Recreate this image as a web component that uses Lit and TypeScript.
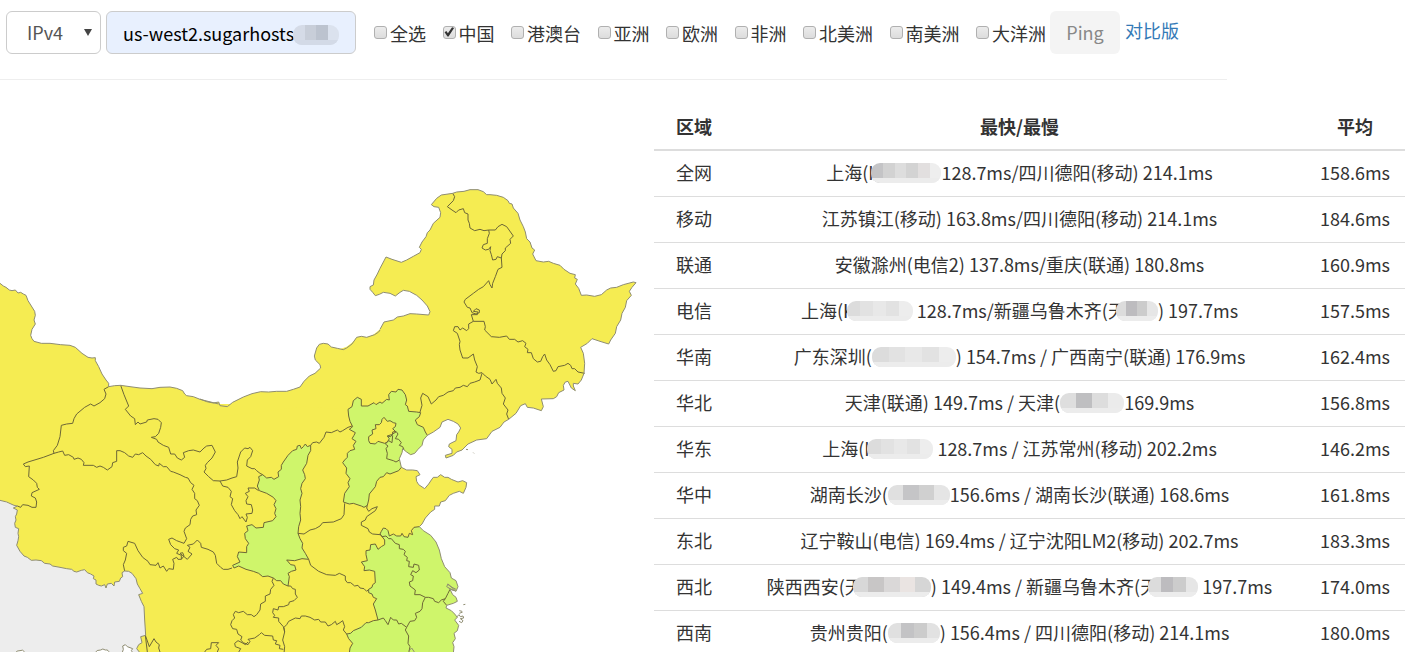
import { LitElement, html, svg, css } from "lit";
import { customElement, property } from "lit/decorators.js";
import { styleMap } from "lit/directives/style-map.js";

const XJ_NORTH =
  "0,40 10,48 18,52 28,60 36,62 46,60 54,69 62,67 70,72 78,76 84,92 94,108 104,124 106,136 102,150 106,162 96,178 92,196 96,206 102,214 124,220 150,220 182,224 210,226 226,232 246,250 264,262 276,264 286,263 286,272 296,290 306,312 318,330 326,340 326,350 344,347 362,346 390,350 420,354 456,356 480,352 510,351 530,355 548,362 554,372 560,377 580,380 600,388 624,394 656,402";
const TIBET_SOUTH =
  "0,691 20,696 42,706 52,708 40,714 52,720 50,732 46,740 48,750 44,760 46,772 56,776 54,790 56,800 54,812 50,826 60,844 72,858 82,862 94,871 108,870 124,872 134,880 150,882 158,888 180,892 200,896 215,898 222,904 230,906 244,901 254,899 262,908 272,912 282,918 280,926 288,930 288,942 296,946 304,948 314,944 318,954 322,942 334,940 342,948 344,936 358,934 362,924 368,920 366,908 374,903 386,904 396,910 402,918 408,926 412,942 420,956 428,970 416,974 424,994 432,1010 434,1050 436,1080 437,1096 422,1100 426,1118 416,1124 410,1136 418,1146";
const MONGOLIA =
  "0,207 20,215 40,219 56,216 60,227 82,230 98,217 130,201 156,191 182,185 206,186 230,184 260,184 280,178 300,171 312,154 328,138 345,130 362,114 360,104 346,90 343,78 350,54 358,43 370,40 384,42 394,51 412,55 430,59 440,54 456,42 470,22 484,19 500,22 524,14 536,6 540,0";
const NORTHEAST =
  "0,507 20,500 36,488 52,472 70,474 84,471 100,464 120,448 132,426 160,420 172,411 190,408 210,401 230,402 266,405 270,395 262,378 246,360 230,346 208,334 190,331 180,337 166,348 150,340 130,337 118,343 106,347 98,337 90,328 90,320 100,315 102,300 112,282 120,265 138,231 156,238 184,247 200,240 220,229 240,218 244,208 238,202 246,186 258,170 262,158 270,150 280,130 300,112 302,98 296,82 282,80 274,74 290,55 304,45 338,40 350,36 372,34 390,29 414,29 430,35 440,44 450,44 470,46 490,52 504,62 508,70 516,72 520,84 534,100 540,120 550,140 556,156 560,176 570,186 576,204 584,210 578,222 588,242 610,246 626,244 640,250 660,256 672,268 690,280 706,284 704,294 712,298 706,312 716,325 724,346 740,345 764,349 784,344 800,330 812,324 830,322 850,314 880,306 888,308 876,322 868,334 874,346 860,362 856,382 846,400 842,420 830,440 826,460 812,480 806,492 780,484 756,476 742,490 722,502 730,520 734,550 732,580 724,600 714,612 700,610 700,618 706,632 694,624 684,604 676,606 670,616 672,630 656,638 650,650 640,656 604,657 610,680 604,692 580,684 562,682 556,671 542,677 528,700 506,718 492,726 480,742 456,754 440,776 410,780 384,792 366,810 350,816 340,826 318,834 316,826 336,820 336,808 326,800 328,792 348,782 350,764 356,756 362,744 354,732 340,724 324,718 306,726 300,742 280,756 262,766";
const HEBEI_COAST = "622,166 610,180 606,196 594,208 584,220 572,224 560,216 548,206 546,218 538,236 544,262";
const SHANDONG_COAST =
  "544,262 560,270 578,270 592,272 600,284 588,290 590,304 596,314 614,326 626,312 634,300 640,292 652,292 662,284 674,292 684,292 694,298 714,306 728,302 740,308 738,322 730,340 718,334 700,340 688,346 676,362 662,366 658,378 644,378 644,388 632,396 616,414 606,432 598,440";
const JIANGSU_COAST =
  "598,440 610,452 632,466 648,486 658,510 664,536 674,560 690,578 694,594 708,602 714,620 708,634 690,626 680,620 684,612 696,622 708,628";
const SHANGHAI = "690,628 698,644 708,652 712,664 700,670 680,676";
const ZHEJIANG_COAST = "680,676 678,684 694,692 704,702 712,712 704,720 716,736 712,752 702,760 706,776 698,788 702,800 700,820";
const ANHUI_JIANGSU =
  "480,462 486,470 498,468 506,476 514,476 526,490 538,494 538,506 550,508 556,514 552,524 562,532 560,542 568,544 566,560 580,562 582,552 596,556 598,570 588,578 578,572 572,584 580,588 578,602 568,606 570,618 586,630 584,644 600,644 616,652";
const ANHUI_SOUTH = "474,720 490,714 496,722 504,734 512,712 520,720 530,720 536,732 544,730 560,742";
const ZHEJIANG_WEST = "560,742 570,724 584,722 590,712 586,700 600,694 606,686 608,668 616,652";
const JIANGXI_EAST = "560,742 556,750 566,768 564,790 570,800 566,820";
const rev = (p: string) => p.split(" ").reverse().join(" ");

const SHAANXI =
  "272,196 262,200 256,192 250,200 244,206 240,196 232,198 230,208 218,212 204,226 190,246 184,256 184,268 174,276 176,290 162,298 154,292 140,294 128,284 116,290 118,300 112,318 118,332 140,340 160,352 168,362 162,374 168,386 164,400 168,410 158,422 132,428 130,442 108,444 96,434 80,438 84,452 74,460 76,476 86,490 80,500 80,518 56,516 52,530 60,546 38,556 42,564 56,558 78,568 100,574 116,580 128,590 144,588 160,594 170,602 182,602 190,612 204,618 208,590 204,580 214,574 228,570 224,556 212,554 200,540 224,542 246,536 266,538 256,520 246,504 248,490 240,476 234,460 236,440 242,420 240,400 242,380 240,360 246,340 242,326 246,310 256,296 254,284 248,270 260,250 264,226 272,212";
const HEBEI_LAND =
  "544,262 536,272 510,282 500,278 490,290 480,292 470,304 466,320 448,342 446,360 442,376 432,382 424,378 400,370 388,372 370,366 374,340 388,320 384,308 390,296 378,280 380,264 368,248 374,240 382,232 382,220 390,212 404,208 400,196 408,184 396,176 402,166 406,158 388,148 398,140 390,124 386,108 384,88 396,80 400,62 412,52 424,58 424,78 444,78 462,68 468,74 480,66 486,70 500,58 508,60 506,44 514,34 528,36 534,28 546,30 556,44 560,60 556,74 562,78 566,94 590,96 602,98 598,110 586,120 592,134 610,142 616,156 622,166";

const WEST_LINES = [
  "326,350 312,358 318,372 314,386 300,398 282,408 272,402 254,412 230,432 222,446 218,460 200,462 184,466 180,500 172,526 160,542 162,550",
  "162,550 130,562 84,576 70,582 76,590 88,588 86,620 100,630 110,640 112,652 118,658 96,668 94,678 106,684 110,696 108,712 96,712 84,706 68,704 62,712 52,708",
  "162,550 176,546 188,543 194,556 206,554 220,562 222,568 234,564 244,568 252,578 250,586 280,586 290,592 300,588 310,592 322,600 336,590 338,578 350,574 350,542 360,542 374,548 386,558 398,562 406,552 416,554 428,548 438,558 452,568 466,584 476,588 478,580 490,590 500,590 512,604 520,606 540,614 556,622 564,624 572,638 582,646 576,658 584,670 584,686 592,692 598,706 588,720 590,734 578,738 572,748 570,764 556,774 552,784 560,806 552,820 530,812 516,804 506,808 512,824 524,836 536,840 530,850 544,856 544,868 552,858 548,848 540,850 562,868 576,852 564,844 570,832 562,826 580,822 592,810 602,820 604,832 624,838 640,846 646,856 650,880 662,892 670,898 684,898 696,894",
  "374,903 370,884 376,870 380,850 370,842 370,832 380,828 384,814 404,820 414,842 428,862 444,874 450,884 468,886 474,878 480,894 490,888 500,904 506,896 520,898 522,880 518,868 530,862 534,868 544,868",
  "362,346 372,374 386,408 376,418 392,438 404,446 406,464 414,456 420,462 440,456 442,450 462,446 474,448 484,458 482,472 476,490 466,500 454,502 470,508 474,516 490,526 506,532 512,552 524,552 532,564 544,570 554,562 550,548 566,542 580,540 600,546 612,534 620,528 636,526 646,546 636,564 622,578 616,586 618,596 612,606 626,620 640,632 660,633",
  "442,1146 436,1096 448,1130 462,1106 468,1116 478,1124 476,1134 480,1146",
  "614,1146 620,1138 632,1136 634,1118 656,1118 648,1126 656,1136 652,1146",
];
const EAST_LINES = [
  "272,196 278,188 290,186 298,190 312,172 318,156 334,158 352,150 360,156 368,152 384,142 396,138",
  "234,460 252,462 270,450 286,446 300,438 308,428 340,426 364,416 372,404 374,370",
  "442,376 440,384 446,394 456,386 472,380 466,392 440,410 436,420 424,426 424,436 444,446 448,456 458,462 480,464",
  "480,462 494,480 494,494 484,500 474,508 466,492 452,494 450,510 438,512 438,524 442,542 424,546 434,560 432,572 448,570 464,574 466,608 458,614 456,622 446,628 446,638 456,642 460,652 470,656 460,672 466,690 474,720",
  "266,538 272,556 288,568 296,574 320,584 346,586 358,580 376,588 376,600 382,608 392,608 404,618 414,616 420,624 432,626 440,634 446,628",
  "474,720 460,722 446,728 438,728 424,742 400,752 392,760 380,762",
  "194,756 192,742 200,734 206,724 226,714 240,716 244,708 256,708 270,712 284,720 296,718 302,726 316,726 324,738 334,734 346,724 350,734 360,728 368,722 374,740 370,750 380,762 386,776 398,790 390,804 388,820",
  "204,618 212,618 218,626 226,628 226,642 232,652 222,662 208,666 206,674 190,680 176,680 174,690 160,686 158,698 164,706 160,712 176,714 176,724 190,740 194,756 188,780 194,800 192,820",
  "160,594 156,604 162,616 152,628 150,642 136,648 136,664 122,672 120,690 110,704 102,710 94,704 82,704 70,694 56,698 46,694 40,704 44,714 36,722 32,734 38,746 50,748 54,762 66,770 62,780 70,788 84,794 90,784 84,778 104,774 118,764 124,758 134,766 158,768 160,780 170,782 166,792 180,796 178,806 190,808",
  "54,820 62,806 46,800 44,790 54,782 66,788 76,794 84,786",
  "0,303 20,300 36,294 50,290 54,264 52,246 62,216 74,204 84,206 90,202 98,212 92,230 82,240 80,258 96,266 104,266 110,272 120,280 128,284",
  "0,303 8,318 24,322 34,334 30,350 38,356 34,374 44,392 54,404 60,416 66,410 78,426 82,412 78,402 96,400 98,390 94,374 80,372 78,362 84,350 76,340 88,334 84,324 104,324 116,332",
  "502,168 512,170 518,162 518,156 528,154 534,162 526,176 536,178 544,188 538,196 548,200 552,208",
  "518,166 516,188 506,182 496,192 504,198 498,206 502,220 500,236 520,242 528,246 538,240",
  "676,656 684,640 690,628",
  "616,652 626,652 640,656 644,664 656,668 664,660 676,656 670,664 680,676",
];
const NORTHEAST_LINES = [
  "338,40 344,50 340,62 322,80 336,90 348,98 356,90 370,86 374,98 384,102 384,120 388,130 390,144 404,152 420,148 432,152 446,150 448,160 442,176 442,190 430,194 426,204 436,210 446,208 452,200 450,212 454,224 458,240 468,238 472,230 484,234 486,262 474,268 466,290 458,310 456,324 450,314 446,302 430,320 416,328 400,340 376,358 372,366 382,382 390,384 396,398 408,402 418,398 418,390 408,386 400,394 414,396 412,404 394,404 400,424",
  "446,150 466,150 474,140 486,133 500,140 520,168 510,178 512,190 496,204 496,212 486,222 484,234",
  "400,424 432,424 436,440 434,450 454,470 478,472 500,468 508,478 524,478 534,486 548,482 558,490 554,500 564,508 562,518 574,518 580,536 592,546 602,544 608,530 614,522 620,540 630,554 640,574 648,572 654,560 674,556 684,550 692,556 696,566 704,566 714,576 734,580",
  "400,424 386,432 386,446 380,452 368,444 360,450 354,440 344,440 340,452 352,460 360,484 358,494 360,510 368,534 384,534 400,522 404,540 412,560 408,576 416,580 426,578 436,588 450,598 456,612 468,598 472,610 484,624 486,640 496,654 490,672 504,690 500,702 506,718",
  "426,580 420,600 404,606 390,610 382,620 370,616 360,622 346,624 340,632 324,636 310,646 296,650 288,660 274,672 264,650 248,640 242,654 246,676 240,696",
];

/** Map of average latency by province. */
@customElement("ping-map")
class PingMap extends LitElement {
  static styles = css`
    :host { display: block; min-width: 0; min-height: 0; }
    svg { display: block; width: 100%; height: 100%; }
    .y { fill: #f5ec52; stroke: none; }
    .g { fill: #cff56b; stroke: none; }
    .n { fill: #ededed; stroke: none; }
    .w { fill: #fff; }
    .l { fill: none; }
    .l, .w { stroke: #6d6736; stroke-width: 3; stroke-linejoin: round; }
    .w, .c { stroke: #8f8d72; }
  `;
  render() {
    const line = (p: string) => svg`<polyline class="l" points=${p} />`;
    const coast = (p: string) => svg`<polyline class="l c" points=${p} />`;
    return html`<svg viewBox="0 240 1962 1716" preserveAspectRatio="xMinYMin slice" role="img" aria-label="中国">
      <g transform="translate(0 810)">
        <polygon class="n" points="0,691 42,706 300,800 440,900 440,1150 0,1150" />
        <polygon class="y" points="${XJ_NORTH} 722,402 722,1150 ${rev(TIBET_SOUTH)}" />
        <path class="w" d="M46 1150q4-10 14-8q8-5 14 4l4 4M284 1150q6-12 18-10q6-6 14 0q10-2 12 10M366 1150l4-12l-2-10l8-4l6 6l16 6l-4 6l6 8" />
      </g>
      <g transform="translate(600 990)">
        <polygon class="y" points="${MONGOLIA} 720,0 720,230 640,300 540,390 0,390" />
      </g>
      <g transform="translate(1020 540)">
        <polygon class="y" points="${NORTHEAST} 0,770" />
      </g>
      <g transform="translate(660 1140)">
        <polygon class="y" points="-5,110 250,80 622,100 ${HEBEI_COAST} ${SHANDONG_COAST} 560,500 560,820 -5,820" />
        <polygon class="g" points=${SHAANXI} />
        <polygon class="g" points="${HEBEI_LAND} ${HEBEI_COAST}" />
        <polygon class="y" points="446,170 458,162 456,150 468,146 466,134 484,128 492,112 502,124 520,128 528,132 518,146 528,156 514,164 502,168 506,182 494,190 474,186 450,190" />
        <polygon class="g" points="480,462 494,480 494,494 484,500 474,508 466,492 452,494 450,510 438,512 438,524 442,542 424,546 434,560 432,572 464,574 466,608 446,628 446,638 470,656 460,672 466,690 474,720 438,728 400,752 380,762 386,776 398,790 390,804 388,820 ${rev(ZHEJIANG_COAST)} ${rev(SHANGHAI)} ${rev(JIANGSU_COAST)} 582,442 578,464 564,470 542,468 520,466 512,468 504,452 490,444 484,454" />
        ${line(SHAANXI + " 272,196")}${line(HEBEI_LAND)}
        ${line("446,170 458,162 456,150 468,146 466,134 478,134 484,128 486,118 492,112 502,124 510,122 520,128 528,130 526,140 518,146 528,156 514,164 502,168 508,176 502,186 494,190 474,184 466,192 450,190 446,182 446,170")}
        ${line("480,462 484,454 490,444 498,446 504,452 508,468 520,462 530,468 542,468 546,460 552,470 564,472 568,460 578,464 574,452 582,442 598,440")}
        ${line(ANHUI_JIANGSU)}${line(ANHUI_SOUTH)}${line(ZHEJIANG_WEST)}${line(JIANGXI_EAST)}
        ${EAST_LINES.map(line)}
        ${[HEBEI_COAST, SHANDONG_COAST, JIANGSU_COAST, SHANGHAI, ZHEJIANG_COAST].map(coast)}
        <path class="l c" d="M682 612q16 12 24 20q-10 0-20-8M709 712l8-8l4 6l8-2l2 6l-10 2l8 6l-4 6l-8-4M718 692l8 2M730 674l6-1M567 812l8-8l8 12M738 208l6 1M760 218l2 2M718 700l10-4" />
      </g>
      <g transform="translate(0 810)">${WEST_LINES.map(line)}${[XJ_NORTH, TIBET_SOUTH].map(coast)}</g>
      <g transform="translate(600 990)">${coast(MONGOLIA)}</g>
      <g transform="translate(1020 540)">${NORTHEAST_LINES.map(line)}${coast(NORTHEAST.slice(NORTHEAST.indexOf("120,448")))}</g>
    </svg>`;
  }
}

/** Pixelated pill that hides part of a value; `overlap` is how far it covers the text before it. */
@customElement("mosaic-pill")
class MosaicPill extends LitElement {
  @property({ type: Array }) tones: string[] = [];
  @property({ type: Number }) width = 64;
  @property({ type: Number }) overlap = 0;
  static styles = css`
    :host { display: inline-block; vertical-align: middle; position: relative; }
    .pill { display: flex; height: 20px; border-radius: 9px; overflow: hidden; }
    .cell { flex: 1; border-bottom: 5px solid #ececec; }
    .tinted { border-bottom-color: #d3dae7; }
  `;
  @property({ type: Boolean }) tinted = false;
  render() {
    return html`<span class="pill" style=${styleMap({ width: `${this.width}px`, marginLeft: `${-this.overlap}px` })}>
      ${this.tones.map((t) => html`<span class="cell ${this.tinted ? "tinted" : ""}" style=${styleMap({ background: t })}></span>`)}
    </span>`;
  }
}

type Part = string | { w: number; t: string[]; o?: number };
const LIGHT = ["#dcdcdc", "#e2e2e2", "#e8e8e8", "#e2e2e2", "#ededed"];
const MID = ["#d2d2d2", "#dddddd", "#d3d3d3", "#e2dfdf", "#eeeeee"];
const DARK = ["#dcdcdc", "#bdbcbf", "#cccccc", "#e6e6e6"];

const ROWS: [string, Part[], string][] = [
  ["全网", ["上海(H", { w: 70, o: 10, t: ["#c4c4c6", ...MID] }, "128.7ms/四川德阳(移动) 214.1ms"], "158.6ms"],
  ["移动", ["江苏镇江(移动) 163.8ms/四川德阳(移动) 214.1ms"], "184.6ms"],
  ["联通", ["安徽滁州(电信2) 137.8ms/重庆(联通) 180.8ms"], "160.9ms"],
  ["电信", ["上海(K", { w: 66, o: 8, t: LIGHT }, " 128.7ms/新疆乌鲁木齐(天", { w: 42, o: 10, t: DARK }, ") 197.7ms"], "157.5ms"],
  ["华南", ["广东深圳(", { w: 84, t: LIGHT }, ") 154.7ms / 广西南宁(联通) 176.9ms"], "162.4ms"],
  ["华北", ["天津(联通) 149.7ms / 天津(", { w: 64, t: ["#dedede", "#bfbfc1", "#dddddd", "#ebebeb"] }, "169.9ms"], "156.8ms"],
  ["华东", ["上海(H", { w: 66, o: 10, t: LIGHT }, " 128.7ms / 江苏常州(移动) 202.2ms"], "146.2ms"],
  ["华中", ["湖南长沙(", { w: 62, t: ["#e0e0e0", "#c5c5c7", "#d0d0d0", "#e5e5e5"] }, "156.6ms / 湖南长沙(联通) 168.6ms"], "161.8ms"],
  ["东北", ["辽宁鞍山(电信) 169.4ms / 辽宁沈阳LM2(移动) 202.7ms"], "183.3ms"],
  ["西北", ["陕西西安(天", { w: 78, o: 10, t: ["#d8d8d8", "#c8c6c6", "#dad8d8", "#eae4e2", "#d6d6d6"] }, ") 149.4ms / 新疆乌鲁木齐(天", { w: 50, o: 10, t: DARK }, " 197.7ms"], "174.0ms"],
  ["西南", ["贵州贵阳(", { w: 52, t: ["#e0e0e0", "#c3c3c5", "#cccccc", "#e2e2e2"] }, ") 156.4ms / 四川德阳(移动) 214.1ms"], "180.0ms"],
];

const REGIONS = ["全选", "中国", "港澳台", "亚洲", "欧洲", "非洲", "北美洲", "南美洲", "大洋洲"];

@customElement("app-root")
class AppRoot extends LitElement {
  static styles = css`
    :host {
      display: flex; flex-direction: column; height: 100vh; overflow: hidden;
      background: #fff; color: #333;
      font-family: "Noto Sans CJK SC", sans-serif; font-size: 18px; line-height: 25px;
    }
    * { box-sizing: border-box; }
    .bar {
      display: flex; align-items: center; height: 80px; margin-right: 178px;
      padding: 0 6px 14px; border-bottom: 1px solid #eee; white-space: nowrap; flex: none;
    }
    .field, .host { position: relative; flex: none; }
    .field { width: 95px; margin-right: 5px; }
    .host { width: 250px; margin-right: 18px; }
    select, .host input {
      display: block; width: 100%; height: 43px; font: inherit; color: #555;
      border: 1px solid #ccc; border-radius: 6px; background: #fff; appearance: none;
    }
    select { padding: 0 20px; }
    .host input { padding: 0 16px; background: #e8f0fe; color: #000; }
    .field::after {
      content: ""; position: absolute; right: 9px; top: 18px; width: 8px; height: 7px;
      background: #444; clip-path: polygon(0 0, 100% 0, 50% 100%); pointer-events: none;
    }
    .host mosaic-pill { position: absolute; left: 187px; top: 14px; }
    .checks { display: flex; justify-content: space-between; width: 672px; margin: 2px 4px 0 0; flex: none; }
    .checks label { display: flex; align-items: center; gap: 3px; }
    .checks input {
      appearance: none; width: 13px; height: 13px; margin: 0 0 3px;
      border: 1px solid #b0b0b0; border-radius: 3px; background: linear-gradient(#ececec, #dcdcdc);
    }
    .checks input:checked::before {
      content: ""; display: block; width: 11px; height: 11px; background: #333;
      clip-path: polygon(10% 52%, 26% 42%, 40% 62%, 78% 6%, 96% 14%, 46% 92%, 36% 92%);
    }
    .ping {
      height: 43px; padding: 0 15px; margin-right: 5px; width: 70px; flex: none;
      font: inherit; color: #888; background: #f4f4f4; border: 0; border-radius: 6px;
    }
    a { color: #337ab7; text-decoration: none; padding-bottom: 4px; }
    .main {
      display: grid; grid-template-columns: 654fr 751fr; grid-template-rows: minmax(0, 1fr);
      flex: 1; min-height: 0;
    }
    table { width: 100%; border-collapse: collapse; align-self: start; margin-top: 24px; }
    th, td { padding: 10px 0; text-align: center; border-top: 1px solid #ddd; white-space: nowrap; }
    th { font-weight: 700; border-top: 0; border-bottom: 2px solid #ddd; }
    td { padding: 9px 0 11px; }
    .zone { width: 80px; }
    .avg { width: 100px; }
    td mosaic-pill { margin-top: -4px; }
  `;
  render() {
    return html`
      <form class="bar" @submit=${(e: Event) => e.preventDefault()}>
        <div class="field"><select aria-label="IP"><option>IPv4</option><option>IPv6</option></select></div>
        <div class="host">
          <input type="text" aria-label="Host" value="us-west2.sugarhosts" />
          <mosaic-pill tinted .width=${46} .tones=${["#d5dbe7", "#c8ced9", "#bcc3cf", "#dbe2ee"]}></mosaic-pill>
        </div>
        <div class="checks">
          ${REGIONS.map((r) => html`<label><input type="checkbox" ?checked=${r === "中国"} />${r}</label>`)}
        </div>
        <button class="ping" disabled>Ping</button>
        <a href="#">对比版</a>
      </form>
      <div class="main">
        <ping-map></ping-map>
        <table>
          <thead><tr><th class="zone">区域</th><th>最快/最慢</th><th class="avg">平均</th></tr></thead>
          <tbody>
            ${ROWS.map(([zone, parts, avg]) => html`<tr>
              <td>${zone}</td>
              <td>${parts.map((p) => (typeof p === "string" ? p : html`<mosaic-pill .width=${p.w} .overlap=${p.o ?? 0} .tones=${p.t}></mosaic-pill>`))}</td>
              <td>${avg}</td>
            </tr>`)}
          </tbody>
        </table>
      </div>
    `;
  }
}
